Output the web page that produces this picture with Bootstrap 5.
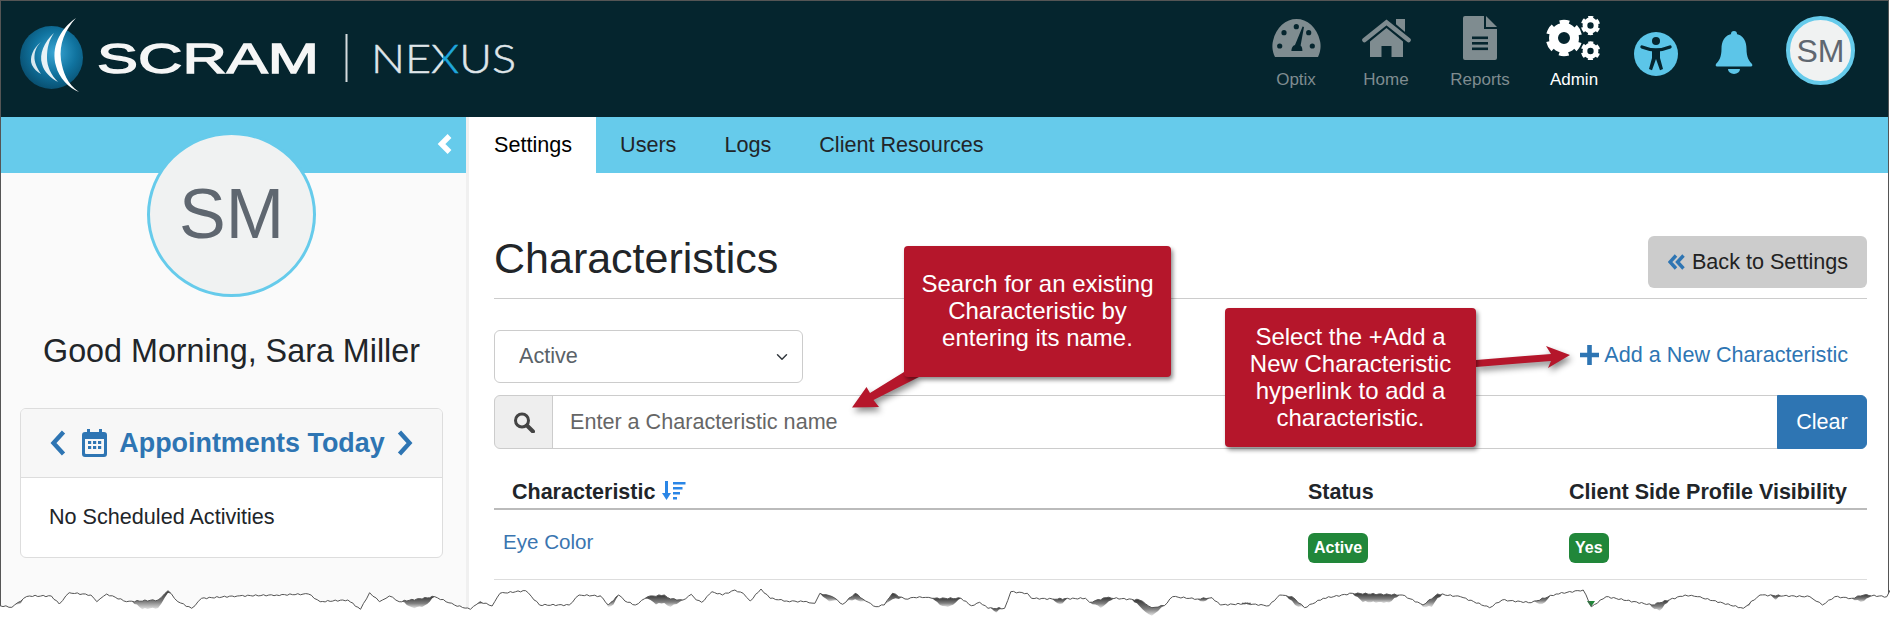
<!DOCTYPE html>
<html lang="en">

<head>
    <meta charset="UTF-8">
    <title>Characteristics</title>
    <link href="https://cdn.jsdelivr.net/npm/bootstrap@5.3.3/dist/css/bootstrap.min.css" rel="stylesheet">
    <style>
        html, body { margin: 0; background: #fff; overflow: hidden; }
        body { font-family: "Liberation Sans", Arial, sans-serif; font-size: 21.6px; color: #212529; }
        .shot { position: relative; width: 1890px; height: 623px; overflow: hidden; }
        .frame { width: 1889px; height: 623px; border: 1px solid #555; border-bottom: 0; }

        .topbar { height: 116px; background: #05252e; }
        .brand-svg { display: block; flex: none; }
        .brand-big { font-family: "Liberation Sans", sans-serif; font-weight: 400; font-size: 43px; fill: #f5f6f6; stroke: #f5f6f6; stroke-width: 1.3px; }
        .brand-thin { font-family: Lato, "Liberation Sans", sans-serif; font-weight: 300; font-size: 40px; fill: url(#nexusFill); stroke: url(#nexusFill); stroke-width: .5px; }
        .top-item { height: 116px; padding-top: 15px; color: #7f8c90; font-size: 17px; line-height: 20px; text-decoration: none; }
        .top-icon { height: 44px; margin-bottom: 10px; }
        .top-item.on { color: #fff; }
        .w-90 { width: 90px; }
        .w-98 { width: 98px; }
        .acc-icon { margin-left: 15px; margin-top: 31px; }
        .bell-icon { margin-left: 37px; margin-top: 30px; }
        .avatar-top { width: 69px; height: 69px; margin: 15px 33px 0 33px; font-size: 32px; border-width: 4px; }
        .avatar-disc { border-radius: 50%; border-style: solid; border-color: #66cbeb; background: #f0f2f2; color: #5f6770; flex: none; }

        .lower { height: 506px; }
        .side { width: 468px; flex: none; background: #fafafa; border-right: 3px solid #f0f0f0; }
        .side-bar { height: 56px; background: #66cbeb; padding-right: 13px; }
        .side-inner { padding: 0 23px 0 19px; }
        .avatar-big { width: 169px; height: 165px; margin: -41px auto 0; font-size: 70px; border-width: 3px; position: relative; }
        .greet { font-size: 32.3px; line-height: 38px; margin: 35px 0 38px; white-space: nowrap; }
        .appt-card { border-color: #ddd; border-radius: 6px; }
        .appt-head { height: 69px; background: #f7f7f7; border-color: #ddd; color: #2e75b3; font-size: 26.9px; font-weight: 700; white-space: nowrap; }
        .appt-body { height: 79px; padding-left: 28px; padding-top: 27px; font-size: 21.6px; line-height: 24px; }

        .tabs-bar { height: 56px; background: #66cbeb; border: 0; flex-wrap: nowrap; }
        .tabs-bar .nav-link { height: 56px; padding: 0 24px; line-height: 56px; color: #212529; border: 0; border-radius: 0; font-size: 21.6px; margin: 0; }
        .tabs-bar .nav-link.active { background: #fff; padding-left: 25px; }
        .page-body { padding: 63px 21px 0 25px; }
        .title-row { height: 63px; padding-bottom: 11px; border-bottom: 1px solid #ccc; }
        .page-title { font-size: 43px; line-height: 52px; margin: -4px 0 0; font-weight: 400; }
        .btn-back { height: 52px; padding: 0 19px 0 20px; background: #ccc; border: 0; border-radius: 6px; font-size: 21.6px; color: #222; gap: 7px; }
        .filter-row { margin-top: 31px; height: 53px; }
        .status-pick { width: 309px; height: 53px; font-size: 21.6px; color: #5a6268; padding-left: 24px; border-color: #ccc; border-radius: 6px; }
        .add-link { color: #2e75b3; font-size: 21.6px; text-decoration: none; margin-right: 19px; margin-top: -2px; gap: 5px; }
        .search-group { margin-top: 12px; height: 54px; }
        .search-addon { width: 59px; justify-content: center; background: #eee; border-color: #ccc; }
        .search-text { font-size: 21.6px; padding-left: 17px; border-color: #ccc; }
        .search-text::placeholder { color: #666; }
        .btn-clear { width: 90px; background: #2e75b3; border-color: #2e75b3; color: #fff; font-size: 21.6px; border-radius: 6px; }

        .char-tbl { margin-top: 24px; table-layout: fixed; width: 1373px; }
        .char-tbl.table>:not(caption)>*>* { padding: 0; border-bottom-width: 0; box-shadow: none; background: transparent; }
        .char-tbl.table>thead>tr>th { height: 36px; padding-top: 7px; font-size: 21.5px; line-height: 24px; vertical-align: top; border-bottom: 2px solid #bbb; white-space: nowrap; }
        .char-tbl.table>thead>tr>th:first-child { padding-left: 18px; }
        .char-tbl.table>tbody>tr>td { height: 70px; border-bottom: 1px solid #ddd; vertical-align: top; padding-top: 20px; }
        .col-name { width: 814px; }
        .col-status { width: 261px; }
        .sort-icon { margin-left: 1px; vertical-align: -2px; }
        .eye-link { color: #3a75b0; text-decoration: none; font-size: 20.6px; line-height: 24px; margin-left: 9px; display: block; }
        .pill-ok { background: #21873a; color: #fff; font-size: 16px; font-weight: 700; line-height: 30px; height: 30px; padding: 0 6px; border-radius: 6px; display: inline-block; }

        .note-box { position: absolute; background: #b5162b; color: #fff; border-radius: 4px; text-align: center; font-size: 24px; line-height: 27px; box-shadow: 2px 3px 4px rgba(0, 0, 0, .45); }
        .note-one { left: 904px; top: 246px; width: 267px; height: 131px; padding-top: 24px; }
        .note-two { left: 1225px; top: 308px; width: 251px; height: 139px; padding-top: 15px; }
        .note-arrows { position: absolute; left: 0; top: 0; filter: drop-shadow(2px 4px 3px rgba(0, 0, 0, .45)); }
        .tear-svg { position: absolute; left: 0; top: 0; }
    </style>
</head>

<body>
    <div class="shot">
        <div class="frame">
            <header class="topbar d-flex">
                <svg class="brand-svg" width="530" height="116" viewBox="0 1 530 116">
                    <defs>
                        <radialGradient id="globeFill" cx=".55" cy=".42" r=".62">
                            <stop offset="0" stop-color="#3aa6d4" />
                            <stop offset=".55" stop-color="#10739f" />
                            <stop offset="1" stop-color="#084c6c" />
                        </radialGradient>
                        <linearGradient id="nexusFill" gradientUnits="userSpaceOnUse" x1="372" x2="513" y1="0" y2="0">
                            <stop offset=".5" stop-color="#dfe6e8" />
                            <stop offset=".5" stop-color="#1fa8dc" />
                            <stop offset=".62" stop-color="#1fa8dc" />
                            <stop offset=".62" stop-color="#dfe6e8" />
                        </linearGradient>
                    </defs>
                    <circle cx="50.500" cy="57.500" r="31.500" fill="url(#globeFill)" />
                    <path fill="#fff" d="M75 18C58 30 50 48 55 66C58 78 68 88 78 92C66 84 62 72 60 60C58 44 64 30 75 18Z" />
                    <path fill="#e8f2f6" d="M53 33C43 42 38 54 41 64C43 72 50 78 57 82C50 75 46 66 46 58C46 48 48 40 53 33Z" />
                    <path fill="#d9e8ef" d="M40 42C32 48 28 58 31 65C33 69 36 72 40 74C36 68 33 62 33.500 56C34 50 36 46 40 42Z" />
                    <text class="brand-big" x="96" y="73" textLength="222" lengthAdjust="spacingAndGlyphs">SCRAM</text>
                    <rect x="344.500" y="34" width="2" height="48" fill="#d5dcde" />
                    <text class="brand-thin" x="370" y="73" textLength="145" lengthAdjust="spacingAndGlyphs">NEXUS</text>
                </svg>

                <nav class="d-flex ms-auto align-items-start">
                    <a class="top-item w-90 d-flex flex-column align-items-center" href="#">
                        <span class="top-icon d-flex align-items-center">
                            <svg width="49" height="38" viewBox="0 0 49 38">
                                <path fill="#7f8c90" d="M3 38C0 32 0 26 1 22C4 8 14 0 24.500 0C35 0 45 8 48 22C49 26 49 32 46 38Z" />
                                <g fill="#05252e">
                                    <circle cx="12" cy="13.700" r="2.600" />
                                    <circle cx="24.300" cy="7.700" r="2.600" />
                                    <circle cx="36.700" cy="13.700" r="2.600" />
                                    <circle cx="7.700" cy="27" r="2.600" />
                                    <circle cx="40.300" cy="27" r="2.600" />
                                    <path d="M30.600 7.500L32 8L28.600 26.500C30 27.500 30.400 29.500 30.400 32H19.400C19.400 29 20.500 26.800 23 26Z" />
                                </g>
                            </svg>
                        </span>
                        Optix
                    </a>
                    <a class="top-item w-90 d-flex flex-column align-items-center" href="#">
                        <span class="top-icon d-flex align-items-center">
                            <svg width="49" height="38" viewBox="0 0 49 38">
                                <g fill="#7f8c90">
                                    <rect x="34" y="0" width="9" height="14" />
                                    <path d="M8 22.500L24.500 9L41 22.500V38H29.500V27H19.500V38H8Z" />
                                </g>
                                <path d="M2.500 21L24.500 2.500L46.500 21" fill="none" stroke="#05252e" stroke-width="8" />
                                <path d="M2.500 21L24.500 3.500L46.500 21" fill="none" stroke="#7f8c90" stroke-width="4.600" stroke-linecap="round" />
                            </svg>
                        </span>
                        Home
                    </a>
                    <a class="top-item w-98 d-flex flex-column align-items-center" href="#">
                        <span class="top-icon d-flex align-items-center">
                            <svg width="34" height="44" viewBox="0 0 34 44">
                                <path fill="#7f8c90" d="M2 0H21V13H34V42Q34 44 32 44H2Q0 44 0 42V2Q0 0 2 0Z" />
                                <path fill="#7f8c90" d="M23 0L34 11H23Z" />
                                <g fill="#05252e">
                                    <rect x="9" y="20.500" width="16" height="2.600" />
                                    <rect x="9" y="26" width="16" height="2.600" />
                                    <rect x="9" y="31.500" width="16" height="2.600" />
                                </g>
                            </svg>
                        </span>
                        Reports
                    </a>
                    <a class="top-item on w-90 d-flex flex-column align-items-center" href="#">
                        <span class="top-icon d-flex align-items-center">
                            <svg width="56" height="44" viewBox="0 0 56 44">
                                <defs>
                                    <g id="gearShape" fill="none" stroke="#fff">
                                        <circle r="10.500" stroke-width="9" />
                                        <circle r="15.500" stroke-width="5.400" stroke-dasharray="9 7.230" stroke-dashoffset="4.500" transform="rotate(30)" />
                                    </g>
                                </defs>
                                <use href="#gearShape" transform="translate(18 22)" />
                                <use href="#gearShape" transform="translate(44.500 9.500) scale(.53)" />
                                <use href="#gearShape" transform="translate(44.500 35) scale(.53)" />
                            </svg>
                        </span>
                        Admin
                    </a>
                    <svg class="acc-icon" width="44" height="44" viewBox="0 0 44 44">
                        <circle cx="22" cy="22" r="22" fill="#5cc5e8" />
                        <g fill="#05252e">
                            <circle cx="22" cy="9" r="4" />
                            <path d="M18 17.500H26V26L29 37L26 38.200L22 27L18 38.200L15 37L18 26Z" />
                        </g>
                        <path d="M8 15C13 17 17.500 18 22 18C26.500 18 31 17 36 15" fill="none" stroke="#05252e" stroke-width="3.400" stroke-linecap="round" />
                    </svg>
                    <svg class="bell-icon" width="38" height="43" viewBox="0 0 38 43">
                        <g fill="#5cc5e8">
                            <circle cx="19" cy="3" r="3" />
                            <path d="M19 3C9 3 6.500 11 6.500 18C6.500 26 4 30 1 33Q0 35 2 35.500H36Q38 35 37 33C34 30 31.500 26 31.500 18C31.500 11 29 3 19 3Z" />
                            <path d="M13 38H25A6 5 0 0 1 13 38Z" />
                        </g>
                    </svg>
                    <div class="avatar-disc avatar-top d-flex align-items-center justify-content-center">SM</div>
                </nav>
            </header>

            <div class="lower d-flex">
                <aside class="side">
                    <div class="side-bar d-flex align-items-start justify-content-end">
                        <svg class="mt-3" width="16" height="22" viewBox="0 0 16 22">
                            <path d="M12.500 3L4.500 11L12.500 19" fill="none" stroke="#fff" stroke-width="5.400" />
                        </svg>
                    </div>
                    <div class="side-inner">
                        <div class="avatar-disc avatar-big d-flex align-items-center justify-content-center">SM</div>
                        <div class="greet text-center">Good Morning, Sara Miller</div>
                        <div class="card appt-card">
                            <div class="card-header appt-head d-flex align-items-center justify-content-center">
                                <svg class="me-3" width="16" height="26" viewBox="0 0 16 26">
                                    <path d="M13.500 2L3.500 13L13.500 24" fill="none" stroke="#2e75b3" stroke-width="4.400" />
                                </svg>
                                <svg width="25" height="28" viewBox="0 0 25 28">
                                    <path fill="#2e75b3" d="M5 0H8V3H17V0H20V3H22Q25 3 25 6V25Q25 28 22 28H3Q0 28 0 25V6Q0 3 3 3H5ZM3 10V24Q3 25 4 25H21Q22 25 22 24V10Z" />
                                    <g fill="#2e75b3">
                                        <rect x="6" y="12" width="3.200" height="3" />
                                        <rect x="11" y="12" width="3.200" height="3" />
                                        <rect x="16" y="12" width="3.200" height="3" />
                                        <rect x="6" y="17" width="3.200" height="3" />
                                        <rect x="11" y="17" width="3.200" height="3" />
                                        <rect x="16" y="17" width="3.200" height="3" />
                                    </g>
                                </svg>
                                <span class="mx-2 px-1">Appointments Today</span>
                                <svg width="16" height="26" viewBox="0 0 16 26">
                                    <path d="M2.500 2L12.500 13L2.500 24" fill="none" stroke="#2e75b3" stroke-width="4.400" />
                                </svg>
                            </div>
                            <div class="card-body appt-body">No Scheduled Activities</div>
                        </div>
                    </div>
                </aside>

                <main class="flex-grow-1">
                    <ul class="nav nav-tabs tabs-bar">
                        <li class="nav-item"><a class="nav-link active" href="#">Settings</a></li>
                        <li class="nav-item"><a class="nav-link" href="#">Users</a></li>
                        <li class="nav-item"><a class="nav-link" href="#">Logs</a></li>
                        <li class="nav-item"><a class="nav-link" href="#">Client Resources</a></li>
                    </ul>
                    <div class="page-body">
                        <div class="title-row d-flex justify-content-between align-items-start">
                            <h1 class="page-title">Characteristics</h1>
                            <button class="btn btn-back d-flex align-items-center" type="button">
                                <svg width="17" height="16" viewBox="0 0 17 16">
                                    <path d="M8 1.500L2 8L8 14.500M15.500 1.500L9.500 8L15.500 14.500" fill="none" stroke="#2e75b3" stroke-width="3.400" />
                                </svg>
                                Back to Settings
                            </button>
                        </div>
                        <div class="filter-row d-flex justify-content-between align-items-center">
                            <select class="form-select status-pick">
                                <option>Active</option>
                                <option>Inactive</option>
                            </select>
                            <a class="add-link d-flex align-items-center" href="#">
                                <svg width="19" height="20" viewBox="0 0 19 20">
                                    <path d="M7.200 0H11.800V7.800H19V12.200H11.800V20H7.200V12.200H0V7.800H7.200Z" fill="#2e75b3" />
                                </svg>
                                Add a New Characteristic
                            </a>
                        </div>
                        <div class="input-group search-group">
                            <span class="input-group-text search-addon">
                                <svg width="22" height="21" viewBox="0 0 22 21">
                                    <circle cx="9" cy="8.500" r="6.500" fill="none" stroke="#444" stroke-width="3" />
                                    <path d="M14 13.500L20 19.500" stroke="#444" stroke-width="4" stroke-linecap="round" />
                                </svg>
                            </span>
                            <input class="form-control search-text" type="text" placeholder="Enter a Characteristic name">
                            <button class="btn btn-clear" type="button">Clear</button>
                        </div>
                        <table class="table char-tbl">
                            <thead>
                                <tr>
                                    <th class="col-name">Characteristic
                                        <svg class="sort-icon" width="24" height="20" viewBox="0 0 24 20">
                                            <path d="M4.500 0V14" fill="none" stroke="#2a86e6" stroke-width="3" />
                                            <path d="M0 12H9L4.500 19Z" fill="#2a86e6" />
                                            <path d="M11 1H23.500V3.600H11ZM11 6H20.500V8.600H11ZM11 11H18V13.600H11ZM11 16H15V18.600H11Z" fill="#2a86e6" />
                                        </svg>
                                    </th>
                                    <th class="col-status">Status</th>
                                    <th>Client Side Profile Visibility</th>
                                </tr>
                            </thead>
                            <tbody>
                                <tr>
                                    <td><a class="eye-link" href="#">Eye Color</a></td>
                                    <td><span class="pill-ok">Active</span></td>
                                    <td><span class="pill-ok">Yes</span></td>
                                </tr>
                            </tbody>
                        </table>
                    </div>
                </main>
            </div>
        </div>

        <svg class="note-arrows" width="1890" height="623" viewBox="0 0 1890 623">
            <path fill="#b5162b" d="M904 372L919 377L873.500 400L879 407L852 407.500L866.500 387L870 393Z" />
            <path fill="#b5162b" d="M1476 360L1551 354L1546 346L1570 355L1548 368L1551 361L1476 367Z" />
        </svg>
        <div class="note-box note-one">Search for an existing<br>Characteristic by<br>entering its name.</div>
        <div class="note-box note-two">Select the +Add a<br>New Characteristic<br>hyperlink to add a<br>characteristic.</div>

        <svg class="tear-svg" id="tear" width="1890" height="623" viewBox="0 0 1890 623">
            <defs>
                <linearGradient id="tearShade" x1="0" x2="0" y1="0" y2="1">
                    <stop offset="0" stop-color="#333" />
                    <stop offset=".6" stop-color="#808080" />
                    <stop offset="1" stop-color="#e6e6e6" />
                </linearGradient>
            </defs>
        </svg>
    </div>

    <script src="https://cdn.jsdelivr.net/npm/bootstrap@5.3.3/dist/js/bootstrap.bundle.min.js"></script>
    <script>
        // torn paper edge, points read off the picture in three stretches
        const left = [[0,857],[30,862],[60,835],[75,828],[130,828],[150,852],[175,818],[230,825],[245,845],[270,822],[320,845],[400,840],[425,812],[450,845],[485,865],[510,835],[600,828],[700,825],[780,822],[810,845],[880,840],[912,868],[935,818],[960,845],[985,828],[1010,845],[1100,830],[1150,855],[1190,868],[1215,845],[1245,858],[1265,820],[1330,812],[1365,855],[1440,855],[1465,825],[1518,828]]
            .map(p => [p[0] / 2.53, 320 + p[1] / 3]);
        const mid = [[0,62],[20,90],[45,60],[60,78],[85,90],[115,65],[155,60],[170,72],[200,75],[220,58],[232,75],[245,82],[270,50],[295,60],[325,45],[345,55],[362,78],[388,42],[410,70],[450,78],[490,80],[518,85],[530,55],[560,65],[585,88],[615,55],[640,78],[665,95],[685,90],[705,55],[735,72],[770,65],[800,70],[870,70],[895,92],[915,82],[935,100],[975,100],[990,50],[1030,55],[1040,70],[1090,72],[1170,70],[1180,82],[1220,68],[1300,75],[1330,98],[1360,92],[1380,65],[1440,72],[1475,68],[1495,90],[1568,85]]
            .map(p => [600 + p[0] / 2.41, 575 + p[1] / 3]);
        const right = [[5,490],[70,497],[95,465],[125,470],[155,503],[200,475],[270,460],[390,465],[440,495],[475,462],[530,470],[600,503],[630,480],[700,488],[760,462],[825,450],[845,500],[880,470],[990,495],[1070,465],[1100,470],[1210,505],[1250,465],[1370,470],[1400,495],[1430,470],[1470,475],[1500,465],[1555,470],[1563,450]]
            .map(p => [1240 + p[0] / 2.404, 440 + p[1] / 3]);
        const pts = [];
        left.concat(mid, right).forEach((p, i, all) => {
            const next = all[i + 1];
            pts.push(p);
            if (!next) return;
            const steps = Math.floor((next[0] - p[0]) / 2.5);
            for (let s = 1; s < steps; s++) {
                const t = s / steps;
                const wob = Math.sin(p[0] * 1.7 + s * 2.3) * .7;
                pts.push([p[0] + (next[0] - p[0]) * t, p[1] + (next[1] - p[1]) * t + wob]);
            }
        });
        const toPath = list => list.map((p, i) => (i ? 'L' : 'M') + p[0].toFixed(1) + ' ' + p[1].toFixed(1)).join('');
        const shaded = [[12,24],[130,174],[358,366],[400,437],[474,484],[605,620],[642,683],[815,840],[843,866],[884,902],[930,961],[988,1003],[1052,1069],[1088,1116],[1130,1165],[1195,1210],[1283,1306],[1352,1401],[1419,1444],[1533,1552],[1648,1672],[1683,1690],[1744,1754],[1768,1782],[1850,1872]];

        let markup = '<path fill="#fff" d="' + toPath(pts) + 'L1890 623L0 623Z"/>';
        markup += '<path fill="#21873a" d="M1587 601L1595 601L1591 607Z"/>';
        shaded.forEach(r => {
            const part = pts.filter(p => p[0] >= r[0] && p[0] <= r[1]);
            if (part.length < 2) return;
            const lower = part.slice().reverse().map((p, i, a) => {
                const edge = Math.min(i, a.length - 1 - i);
                return [p[0], p[1] + Math.min(edge * 2, 8)];
            });
            markup += '<path fill="url(#tearShade)" d="' + toPath(part.concat(lower)) + 'Z"/>';
        });
        markup += '<path fill="none" stroke="#555" stroke-width="1" d="' + toPath(pts) + '"/>';
        document.getElementById('tear').insertAdjacentHTML('beforeend', markup);
    </script>
</body>

</html>
